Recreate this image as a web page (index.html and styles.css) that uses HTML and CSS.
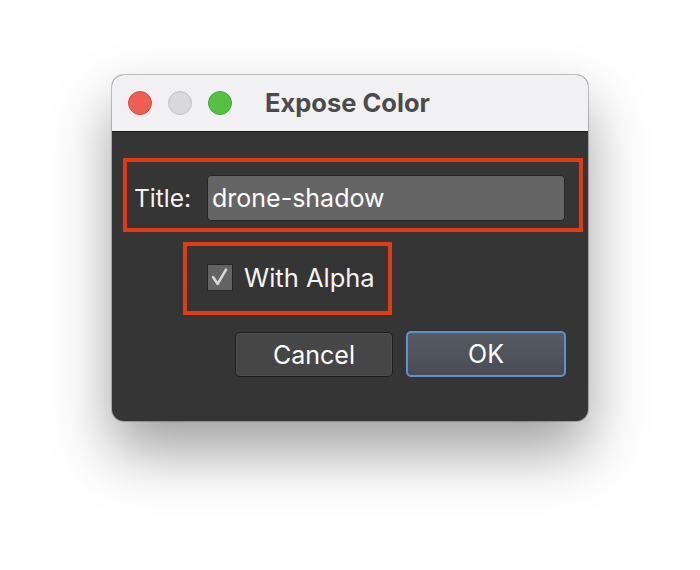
FILE: index.html
```html
<!DOCTYPE html>
<html>
<head>
<meta charset="utf-8">
<link rel="stylesheet" href="styles.css">
</head>
<body>
<div class="stage">
  <div class="window">
    <div class="titlebar">
      <div class="lights">
        <span class="light red"></span>
        <span class="light gray"></span>
        <span class="light green"></span>
      </div>
      <div class="title">Expose Color</div>
    </div>
    <div class="content">
      <div class="row-title mark">
        <span class="label">Title:</span>
        <div class="field">drone-shadow</div>
      </div>
      <div class="row-check mark">
        <span class="checkbox">
          <svg width="26" height="27" viewBox="0 0 26 27"><path d="M5.5 13 L10.5 20.5 L19.5 5" fill="none" stroke="#d8d8d8" stroke-width="2.8" stroke-linecap="round" stroke-linejoin="round"/></svg>
        </span>
        <span class="check-label">With Alpha</span>
      </div>
      <div class="buttons">
        <div class="btn cancel">Cancel</div>
        <div class="btn ok">OK</div>
      </div>
    </div>
  </div>
</div>
</body>
</html>
```
FILE: styles.css
```css
html, body {
  margin: 0;
  padding: 0;
  background: #ffffff;
  font-family: Inter, "Liberation Sans", sans-serif;
}
.stage {
  width: 700px;
  height: 570px;
  padding: 75px 0 0 112px;
  box-sizing: border-box;
}
.window {
  width: 476px;
  height: 346px;
  border-radius: 12px;
  background: #353535;
  overflow: hidden;
  box-shadow: 0 0 0 1px rgba(0,0,0,0.22), 0 30px 60px rgba(0,0,0,0.38);
  display: flex;
  flex-direction: column;
}
.titlebar {
  height: 56px;
  background: #f1f1f4;
  border-bottom: 1px solid #1c1c1c;
  display: flex;
  align-items: center;
}
.lights {
  display: flex;
  gap: 16px;
  padding-left: 16px;
}
.light {
  width: 24px;
  height: 24px;
  border-radius: 50%;
  box-sizing: border-box;
}
.red { background: #ed5f53; border: 1px solid #d4493e; }
.gray { background: #d9d9dc; border: 1px solid #c2c2c5; }
.green { background: #55c143; border: 1px solid #43a734; }
.title {
  margin-left: 33px;
  margin-bottom: 2px;
  font-size: 25.5px;
  font-weight: 700;
  color: #4b4b4b;
}
.content {
  flex: 1;
  display: flex;
  flex-direction: column;
}
.mark {
  border: 4px solid #e23a16;
  box-sizing: border-box;
}
.row-title {
  margin: 26px 0 0 11px;
  width: 460px;
  height: 74px;
  display: flex;
  align-items: center;
  padding: 6px 14px 0 7px;
}
.label {
  color: #f2f2f2;
  font-size: 24.5px;
  width: 73px;
}
.field {
  flex: 1;
  height: 46px;
  background: #656565;
  border: 1px solid #262626;
  border-radius: 4px;
  box-sizing: border-box;
  color: #ffffff;
  font-size: 25px;
  line-height: 44px;
  padding-left: 4px;
}
.row-check {
  margin: 10px 0 0 71px;
  width: 209px;
  height: 73px;
  display: flex;
  align-items: center;
  padding: 0 0 2px 20px;
}
.checkbox {
  width: 26px;
  height: 27px;
  background: #636363;
  border: 1px solid #262626;
  box-sizing: border-box;
  display: flex;
  align-items: center;
  justify-content: center;
}
.checkbox svg { display: block; }
.check-label {
  color: #f4f4f4;
  font-size: 25.5px;
  margin-left: 11px;
}
.buttons {
  margin-top: 16px;
  display: flex;
  justify-content: flex-end;
  gap: 13px;
  padding-right: 22px;
}
.btn {
  height: 46px;
  box-sizing: border-box;
  border-radius: 5px;
  color: #ffffff;
  font-size: 25px;
  display: flex;
  align-items: center;
  justify-content: center;
}
.cancel {
  width: 158px;
  height: 45px;
  margin-top: 1px;
  background: #464646;
  border: 1px solid #1e1e1e;
  box-shadow: inset 0 0 0 1px #505050;
}
.ok {
  width: 160px;
  background: linear-gradient(#575b63, #484c54);
  border: 2px solid #5f90d2;
}
```
